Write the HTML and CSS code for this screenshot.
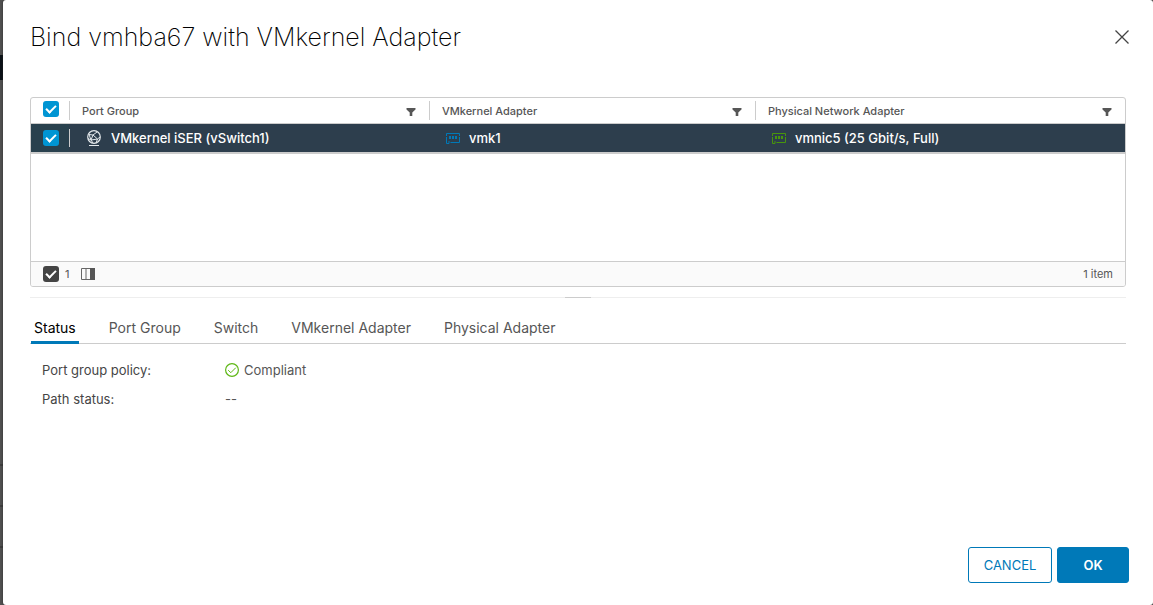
FILE: index.html
```html
<!DOCTYPE html>
<html lang="en">
<head>
<meta charset="utf-8">
<meta name="viewport" content="width=device-width, initial-scale=1">
<title>Bind vmhba67 with VMkernel Adapter</title>
<link rel="stylesheet" href="styles.css">
</head>
<body>
<svg class="symbols" aria-hidden="true">
  <symbol id="filter" viewBox="0 0 10 10"><path d="M0.500 1h9v1.500L6.300 5.500V9H3.700V5.500L0.500 2.500z" fill="currentColor"/></symbol>
  <symbol id="nic" viewBox="0 0 14 11">
    <path d="M.5 3V.5h13v2.500M13.500 4v5.500H4.500M.5 4v6.500h2.500V8" fill="none" stroke="currentColor"/>
    <path d="M3 3h2v3H3zM6 3h2v3H6zM9 3h2v3H9z" fill="currentColor"/>
  </symbol>
</svg>
<div class="backdrop">
  <section class="dialog" role="dialog" aria-labelledby="dialog-title">
    <header class="dialog-header">
      <h1 class="dialog-title" id="dialog-title">Bind vmhba67 with VMkernel Adapter</h1>
      <button class="close" type="button" aria-label="Close">
        <svg width="14" height="14" viewBox="0 0 14 14"><path d="M.5.5l13 13M13.500.5l-13 13" fill="none" stroke="currentColor" stroke-width="1.300"/></svg>
      </button>
    </header>

    <div class="datagrid">
      <table class="grid">
        <colgroup><col class="col-check"><col class="col-group"><col class="col-vmk"><col class="col-nic"></colgroup>
        <thead>
          <tr>
            <th class="head-check"><input class="check" type="checkbox" checked aria-label="Select all"></th>
            <th scope="col"><div class="head-cell"><span>Port Group</span><button class="filter" type="button" aria-label="Filter port group"><svg width="10" height="10"><use href="#filter"/></svg></button></div></th>
            <th scope="col"><div class="head-cell"><span>VMkernel Adapter</span><button class="filter" type="button" aria-label="Filter VMkernel adapter"><svg width="10" height="10"><use href="#filter"/></svg></button></div></th>
            <th scope="col"><div class="head-cell"><span>Physical Network Adapter</span><button class="filter" type="button" aria-label="Filter physical adapter"><svg width="10" height="10"><use href="#filter"/></svg></button></div></th>
          </tr>
        </thead>
        <tbody>
          <tr>
            <td class="cell-check"><input class="check" type="checkbox" checked aria-label="Select VMkernel iSER"></td>
            <td><div class="body-cell">
              <svg width="16" height="16" viewBox="0 0 16 16" fill="none" stroke="#e4e9ec">
                <circle cx="8" cy="7" r="6.300" stroke-width="1.200"/>
                <path d="M3 4.500l4 .5 4-3M7 5l4.500 4 2.500-2M2 8.500l3 1.500 6.500-1M3 4.500l2 5.500M7 5l-2 5M11.500 9l-1.500 4M5 10l2 3"/>
                <path d="M3 15.500h10"/>
              </svg>VMkernel iSER (vSwitch1)</div></td>
            <td><div class="body-cell"><svg class="nic nic-blue" width="14" height="11"><use href="#nic"/></svg>vmk1</div></td>
            <td><div class="body-cell"><svg class="nic nic-green" width="14" height="11"><use href="#nic"/></svg>vmnic5 (25 Gbit/s, Full)</div></td>
          </tr>
        </tbody>
      </table>
      <div class="grid-space"></div>
      <div class="grid-footer">
        <label class="selected"><input class="check check-dark" type="checkbox" checked>1</label>
        <button class="columns" type="button" aria-label="Show columns">
          <svg width="14" height="12" viewBox="0 0 14 12"><path d="M.5.5h13v11H.5zM5 .5v11" fill="none" stroke="#666"/><path d="M9 0h5v12H9z" fill="#565656"/></svg>
        </button>
        <span class="count">1 item</span>
      </div>
    </div>

    <div class="splitter"><span class="grip"></span></div>

    <div class="tabs" role="tablist">
      <button class="tab active" type="button" role="tab" aria-selected="true">Status</button>
      <button class="tab" type="button" role="tab">Port Group</button>
      <button class="tab" type="button" role="tab">Switch</button>
      <button class="tab" type="button" role="tab">VMkernel Adapter</button>
      <button class="tab" type="button" role="tab">Physical Adapter</button>
    </div>

    <dl class="details">
      <dt>Port group policy:</dt>
      <dd class="compliant"><svg width="14" height="14" viewBox="0 0 14 14" fill="none" stroke="#5eb715"><circle cx="7" cy="7" r="6.400" stroke-width="1.200"/><path d="M3.200 7.200l2.600 2.500L10.800 4.700"/></svg>Compliant</dd>
      <dt>Path status:</dt>
      <dd>--</dd>
    </dl>

    <footer class="actions">
      <button class="btn btn-outline" type="button">CANCEL</button>
      <button class="btn btn-primary" type="button">OK</button>
    </footer>
  </section>
</div>
</body>
</html>
```

FILE: styles.css
```css
* { box-sizing: border-box; }
body {
  margin: 0;
  font-family: Inter, "Open Sans", sans-serif;
  font-size: 13px;
  line-height: 16px;
  color: #565656;
}
button { border: 0; padding: 0; background: none; font: inherit; color: inherit; cursor: pointer; }
svg { display: block; flex: none; }
.symbols { position: absolute; width: 0; height: 0; }

.backdrop {
  min-height: 100vh;
  padding-left: 3px;
  display: flex;
  background: linear-gradient(#505050 55px, #0b1117 55px, #0b1117 80px, #505050 80px, #505050 464px, #3d3d3d 464px, #3d3d3d 466px, #505050 466px, #505050 505px, #3d3d3d 505px, #3d3d3d 507px, #505050 507px, #505050 546px, #3d3d3d 546px, #3d3d3d 548px, #505050 548px);
}
.dialog {
  flex: 1;
  min-width: 0;
  display: flex;
  flex-direction: column;
  padding: 21px 24px 22px 27px;
  background: #fff;
  border-radius: 3px;
  box-shadow: 0 0 2px #222;
}
.dialog-header { display: flex; justify-content: space-between; align-items: center; }
.dialog-title { margin: 0; font-size: 25px; font-weight: 200; line-height: 32px; color: #000; }
.close { color: #444; }

.datagrid {
  margin: 44px 3px 0 0;
  border: 1px solid #ccc;
  border-radius: 3px;
  overflow: hidden;
}
.grid { width: 100%; table-layout: fixed; border-collapse: separate; border-spacing: 0; }
.grid th, .grid td { padding: 0; text-align: left; }
.col-check { width: 38px; }
.col-group { width: 32.9%; }
.col-vmk { width: 29.8%; }
.grid th { height: 26px; border-bottom: 1px solid #ccc; font-size: 11px; font-weight: 500; }
.grid .head-check { padding-bottom: 3px; }
.head-cell {
  height: 19px;
  padding: 0 13px 0 12px;
  display: flex;
  align-items: center;
  justify-content: space-between;
  border-left: 1px solid #ccc;
}
.filter { padding-top: 2px; color: #565656; }
.grid td { height: 30px; background: #2d3e4d; border-bottom: 2px solid #ccc; color: #fff; font-weight: 500; }
.grid td.cell-check { background: #29414e; }
.body-cell { height: 18px; display: flex; align-items: center; gap: 9px; padding-left: 17px; }
.cell-check + td .body-cell { padding-left: 16px; border-left: 1px solid #ccc; }
.nic-blue { color: #0079b8; }
.nic-green { color: #48960c; }

.check {
  appearance: none;
  display: grid;
  place-items: center;
  width: 16px;
  height: 16px;
  margin: 0 0 0 12px;
  border-radius: 3px;
  background: #0095d3;
}
.check::before {
  content: "";
  width: 8px;
  height: 4px;
  margin-bottom: 3px;
  border: solid #fff;
  border-width: 0 0 2px 2px;
  transform: rotate(-45deg);
}
.check-dark { margin: 0; background: #444; }

.grid-space { height: 107px; }
.grid-footer {
  height: 25px;
  padding: 0 12px;
  display: flex;
  align-items: center;
  gap: 12px;
  border-top: 1px solid #ccc;
  background: #fafafa;
  font-size: 11px;
}
.selected { display: flex; align-items: center; gap: 6px; }
.count { margin-left: auto; }

.splitter { margin: 10px 3px 0 0; height: 1px; background: #eee; }
.grip { display: block; width: 26px; height: 1px; margin: 0 auto; background: #ccc; }

.tabs {
  margin: 15px 3px 0 0;
  padding-left: 1px;
  display: flex;
  gap: 27px;
  box-shadow: inset 0 -1px #ccc;
}
.tab { height: 31px; padding: 0 3px 2px; font-size: 14px; }
.tab.active { color: #000; box-shadow: inset 0 -3px #0079b8; }

.details {
  margin: 18px 0 0;
  padding-left: 12px;
  display: grid;
  grid-template-columns: 183px 1fr;
  row-gap: 13px;
}
.details dt { color: #454545; }
.details dd { margin: 0; }
.compliant { display: flex; align-items: center; gap: 5px; }

.actions { margin-top: auto; display: flex; justify-content: flex-end; gap: 5px; }
.btn { height: 36px; border: 1px solid #0079b8; border-radius: 3px; font-size: 13px; }
.btn-outline { width: 84px; color: #0079b8; }
.btn-primary { width: 72px; background: #0079b8; color: #fff; font-weight: 600; }
```
